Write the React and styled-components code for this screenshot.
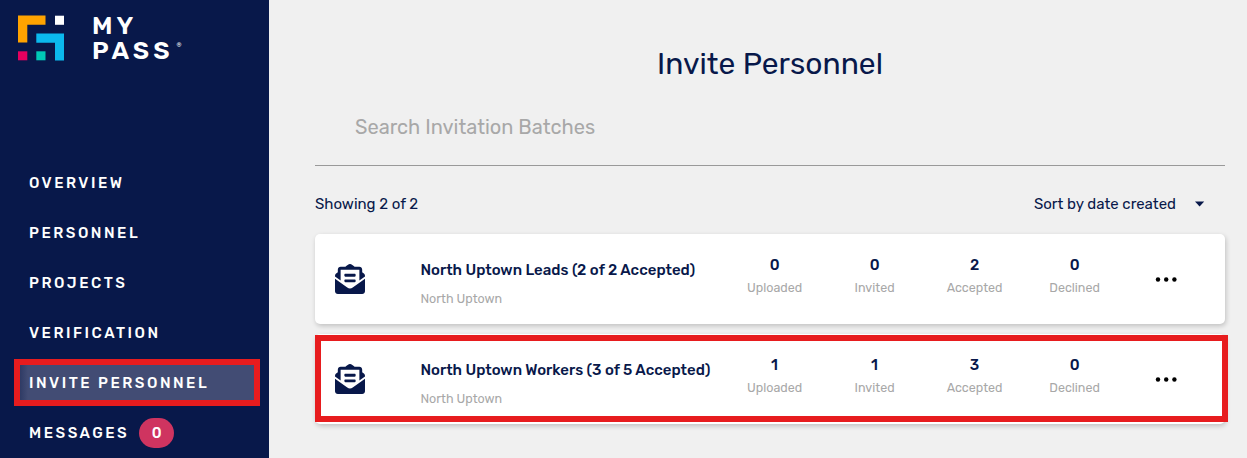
import React from "react"
import styled, { createGlobalStyle } from "styled-components"
import { FaEnvelopeOpenText } from "react-icons/fa"

const GlobalStyle = createGlobalStyle`
  * {
    box-sizing: border-box;
  }
  body {
    margin: 0;
    background: #f0f0f0;
    color: #08184a;
    font-family: Rubik, Roboto, sans-serif;
  }
`
const Page = styled.div`
  display: flex;
  height: 458px;
  overflow: hidden;
`
const Sidebar = styled.aside`
  flex: none;
  width: 269px;
  background: #08184a;
  color: #fff;
`
const Brand = styled.div`
  display: flex;
  align-items: flex-start;
  gap: 28px;
  height: 158px;
  padding: 15px 0 0 18px;
`
const BrandText = styled.div`
  font-weight: 600;
  font-size: 25px;
  line-height: 25px;
  letter-spacing: 4px;
  margin-top: -2px;
  white-space: nowrap;
`
const BrandLine = styled.div`
  display: flex;
  height: 25px;
`
const Registered = styled.span`
  margin: 4px 0 0 3px;
  font-size: 6px;
  line-height: 6px;
  font-weight: 400;
  letter-spacing: 0;
`
const NavItem = styled.a`
  position: relative;
  display: flex;
  align-items: center;
  height: 50px;
  padding-left: 29px;
  font-weight: 500;
  font-size: 15px;
  letter-spacing: 2.5px;
`
const ActiveFill = styled.span`
  position: absolute;
  left: 20px;
  top: 7px;
  width: 234px;
  height: 35px;
  background: linear-gradient(to right, #2f3b65, #424c74 8px);
`
const NavLabel = styled.span`
  position: relative;
`
const Badge = styled.span`
  display: flex;
  align-items: center;
  justify-content: center;
  width: 35px;
  height: 30px;
  margin-left: 10px;
  border-radius: 15px;
  background: #cf3460;
  letter-spacing: 0;
`
const Highlight = styled.div`
  position: absolute;
  left: ${props => props.$left}px;
  top: ${props => props.$top}px;
  width: ${props => props.$width}px;
  height: ${props => props.$height}px;
  border: 6px solid #e71c1e;
  pointer-events: none;
`
const Main = styled.main`
  flex: 1;
  padding: 42px 22px 0 46px;
`
const Title = styled.h1`
  margin: 0;
  font-weight: 400;
  font-size: 30px;
  line-height: 44px;
  text-align: center;
`
const Search = styled.div`
  height: 80px;
  padding-left: 40px;
  border-bottom: 1px solid #999;
  color: #a8a8a8;
  font-size: 20px;
  line-height: 82px;
`
const ListHeader = styled.div`
  display: flex;
  align-items: center;
  justify-content: space-between;
  height: 68px;
  padding: 8px 20px 0 0;
  font-size: 15px;
`
const Sort = styled.div`
  display: flex;
  align-items: center;
  gap: 19px;
`
const Cards = styled.div`
  display: grid;
  gap: 10px;
`
const Card = styled.section`
  position: relative;
  display: flex;
  height: 90px;
  padding-left: 20px;
  border-radius: 5px;
  background: #fff;
  box-shadow: 1px 2px 5px rgba(0, 0, 0, 0.2);
`
const BatchIcon = styled(FaEnvelopeOpenText)`
  flex: none;
  width: 30px;
  height: 30px;
  margin: 30px 55.4px 0 0;
`
const Details = styled.div`
  width: 304.2px;
  padding-top: 26px;
`
const BatchName = styled.div`
  font-weight: 500;
  font-size: 15px;
  line-height: 20px;
  white-space: nowrap;
`
const Project = styled.div`
  margin-top: 10px;
  color: #a8a8a8;
  font-size: 12.5px;
  line-height: 18px;
`
const Stat = styled.div`
  width: 100px;
  padding-top: 21px;
  text-align: center;
`
const Count = styled.div`
  font-weight: 500;
  font-size: 15px;
  line-height: 20px;
`
const StatLabel = styled.div`
  margin-top: 4px;
  color: #a8a8a8;
  font-size: 12.5px;
  line-height: 18px;
`
const More = styled.svg`
  margin: 42px 0 0 30px;
`

const batches = [
  {
    name: "North Uptown Leads (2 of 2 Accepted)",
    project: "North Uptown",
    stats: [["Uploaded", 0], ["Invited", 0], ["Accepted", 2], ["Declined", 0]],
  },
  {
    name: "North Uptown Workers (3 of 5 Accepted)",
    project: "North Uptown",
    stats: [["Uploaded", 1], ["Invited", 1], ["Accepted", 3], ["Declined", 0]],
    highlighted: true,
  },
]

const Logo = () => (
  <svg width="46" height="46" viewBox="0 0 46 46">
    <path fill="#ffa300" d="M0 .5h27.5v9.3H9.3v17.7H0z" />
    <path fill="#fff" d="M37 .7h9v9.1h-9z" />
    <path fill="#0bb9ee" d="M18.3 18.5H46v27H37V27.7H18.3z" />
    <path fill="#e6005f" d="M0 36.3h9.3v9H0z" />
    <path fill="#00c9b7" d="M18.3 36.3h9.2v9h-9.2z" />
  </svg>
)

const Batch = ({ name, project, stats, highlighted }) => (
  <Card>
    <BatchIcon />
    <Details>
      <BatchName>{name}</BatchName>
      <Project>{project}</Project>
    </Details>
    {stats.map(([label, count]) => (
      <Stat key={label}>
        <Count>{count}</Count>
        <StatLabel>{label}</StatLabel>
      </Stat>
    ))}
    <More width="22" height="6" viewBox="0 0 22 6">
      <circle cx="3" cy="3.5" r="2.2" />
      <circle cx="11.2" cy="3.5" r="2.2" />
      <circle cx="19.4" cy="3.5" r="2.2" />
    </More>
    {highlighted && <Highlight $left={0} $top={1} $width={913} $height={87} />}
  </Card>
)

export default class App extends React.Component {
  render() {
    return (
      <Page>
        <GlobalStyle />
        <Sidebar>
          <Brand>
            <Logo />
            <BrandText>
              <BrandLine>MY</BrandLine>
              <BrandLine>
                PASS
                <Registered>®</Registered>
              </BrandLine>
            </BrandText>
          </Brand>
          <nav>
            <NavItem>OVERVIEW</NavItem>
            <NavItem>PERSONNEL</NavItem>
            <NavItem>PROJECTS</NavItem>
            <NavItem>VERIFICATION</NavItem>
            <NavItem>
              <ActiveFill />
              <NavLabel>INVITE PERSONNEL</NavLabel>
              <Highlight $left={14} $top={1} $width={246} $height={47} />
            </NavItem>
            <NavItem>
              MESSAGES
              <Badge>0</Badge>
            </NavItem>
          </nav>
        </Sidebar>
        <Main>
          <Title>Invite Personnel</Title>
          <Search>Search Invitation Batches</Search>
          <ListHeader>
            <span>Showing 2 of 2</span>
            <Sort>
              Sort by date created
              <svg width="10" height="6" viewBox="0 0 10 6">
                <path fill="#08184a" d="M0 .5h9.2L4.6 5.6z" />
              </svg>
            </Sort>
          </ListHeader>
          <Cards>
            {batches.map(batch => (
              <Batch key={batch.name} {...batch} />
            ))}
          </Cards>
        </Main>
      </Page>
    )
  }
}
